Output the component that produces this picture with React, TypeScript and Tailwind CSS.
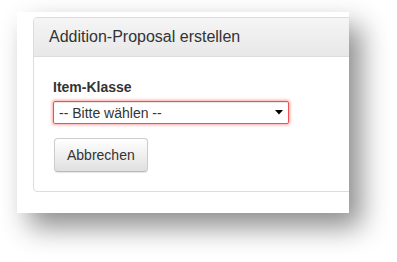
export default function App() {
  return (
    <div
      className="h-[262px] w-[397px] overflow-hidden bg-white pl-[17px] pt-[12px] text-[#333]"
      style={{ fontFamily: '"Liberation Sans", Arial, sans-serif' }}
    >
      <div className="h-[201px] w-[332px] overflow-hidden bg-white pl-[16px] pt-[5px] shadow-[12px_14px_26px_rgba(0,0,0,0.45)]">
        <div className="w-[340px] rounded-[4px] border border-[#ddd] bg-white">
          {/* header */}
          <div className="h-[39px] rounded-t-[3px] border-b border-[#ddd] bg-gradient-to-b from-[#f5f5f5] to-[#e8e8e8] px-[15px] pt-[10px]">
            <h3 className="text-[16px] leading-[17.6px]">Addition-Proposal erstellen</h3>
          </div>

          {/* body */}
          <div className="pb-[19px] pl-[19px] pt-[20px]">
            <label className="mb-[4px] block text-[14px] font-bold leading-[20px]">
              Item-Klasse
            </label>
            <div className="flex h-[23px] w-[236px] items-center justify-between rounded-[2px] border border-[#f05050] pl-[5px] pr-[4px] shadow-[inset_0_1px_1px_rgba(0,0,0,0.1),0_0_3px_1px_rgba(255,90,90,0.55)]">
              <span className="text-[14px] leading-[20px]">-- Bitte wählen --</span>
              <svg width="8" height="5" viewBox="0 0 8 5" className="mr-[1px]">
                <path d="M0 0h8L4 4.5z" fill="#000" />
              </svg>
            </div>
            <button className="ml-[1px] mt-[14px] h-[34px] rounded-[4px] border border-[#ccc] border-b-[#bbb] bg-gradient-to-b from-white to-[#e0e0e0] px-[12px] text-[14px] leading-[20px] shadow-[0_1px_1px_rgba(0,0,0,0.1)]">
              Abbrechen
            </button>
          </div>
        </div>
      </div>
    </div>
  )
}
